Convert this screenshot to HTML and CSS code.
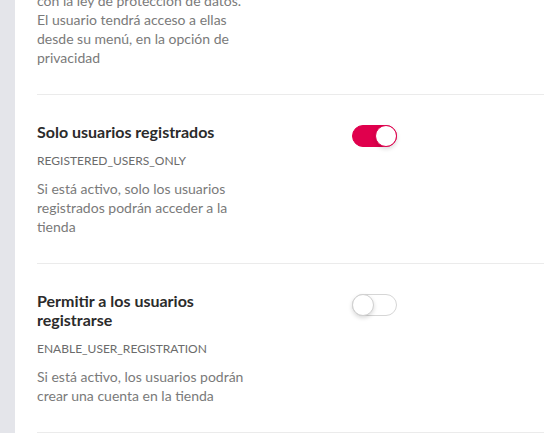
FILE: index.html
```html
<!DOCTYPE html>
<html>
<head>
  <meta charset="UTF-8">
  <title>Ajustes de usuarios</title>
  <link rel="stylesheet" href="styles.css">
</head>
<body>
  <div class="layout">
    <div class="sidebar"></div>
    <div class="settings">
      <div class="setting-row first-row">
        <div class="setting-info">
          <div class="setting-desc">con la ley de protección de datos. El usuario tendrá acceso a ellas desde su menú, en la opción de privacidad</div>
        </div>
      </div>

      <div class="setting-row">
        <div class="setting-info">
          <div class="setting-title">Solo usuarios registrados</div>
          <div class="setting-code">REGISTERED_USERS_ONLY</div>
          <div class="setting-desc">Si está activo, solo los usuarios registrados podrán acceder a la tienda</div>
        </div>
        <div class="setting-control">
          <label class="switch">
            <input type="checkbox" checked>
            <span class="slider"></span>
          </label>
        </div>
      </div>

      <div class="setting-row">
        <div class="setting-info">
          <div class="setting-title">Permitir a los usuarios registrarse</div>
          <div class="setting-code">ENABLE_USER_REGISTRATION</div>
          <div class="setting-desc">Si está activo, los usuarios podrán crear una cuenta en la tienda</div>
        </div>
        <div class="setting-control">
          <label class="switch">
            <input type="checkbox">
            <span class="slider"></span>
          </label>
        </div>
      </div>
    </div>
  </div>
</body>
</html>
```

FILE: styles.css
```css
body {
  margin: 0;
  padding: 0;
  background: #fff;
  font-family: 'Lato', 'Open Sans', sans-serif;
  overflow: hidden;
}
.layout {
  display: flex;
  min-height: 100vh;
}
.sidebar {
  flex: 0 0 15px;
  background: #e4e5ea;
}
.settings {
  flex: 1;
  padding-left: 22px;
  margin-top: -9px;
}
.setting-row {
  display: flex;
  align-items: flex-start;
  padding: 27px 0 27px;
  border-bottom: 1px solid #ebebeb;
}
.first-row {
  padding-top: 0;
  padding-bottom: 27px;
}
.setting-info {
  flex: 0 0 218px;
}
.setting-title {
  color: #2b2b2b;
  font-size: 16px;
  font-weight: bold;
  line-height: 19px;
  margin-bottom: 11px;
}
.setting-code {
  color: #6b6b6b;
  font-size: 12px;
  line-height: 18px;
  margin-bottom: 9px;
}
.setting-desc {
  color: #7a7a7a;
  font-size: 14px;
  line-height: 19px;
}
.setting-control {
  margin-left: 97px;
  padding-top: 3px;
}
.switch {
  position: relative;
  display: inline-block;
  width: 45px;
  height: 22px;
}
.switch input {
  opacity: 0;
  width: 0;
  height: 0;
}
.slider {
  position: absolute;
  inset: 0;
  background: #fff;
  border: 1px solid #d6d6d6;
  border-radius: 11px;
  box-sizing: border-box;
  cursor: pointer;
}
.slider::before {
  content: "";
  position: absolute;
  top: -1px;
  left: -1px;
  width: 22px;
  height: 22px;
  box-sizing: border-box;
  border-radius: 50%;
  background: #fff;
  border: 1px solid #d0d0d0;
  box-shadow: 0 2px 4px rgba(0,0,0,0.15);
}
.switch input:checked + .slider {
  background: #e0004d;
  border-color: #e0004d;
}
.switch input:checked + .slider::before {
  left: auto;
  right: -1px;
  border-color: #e0004d;
}
```
